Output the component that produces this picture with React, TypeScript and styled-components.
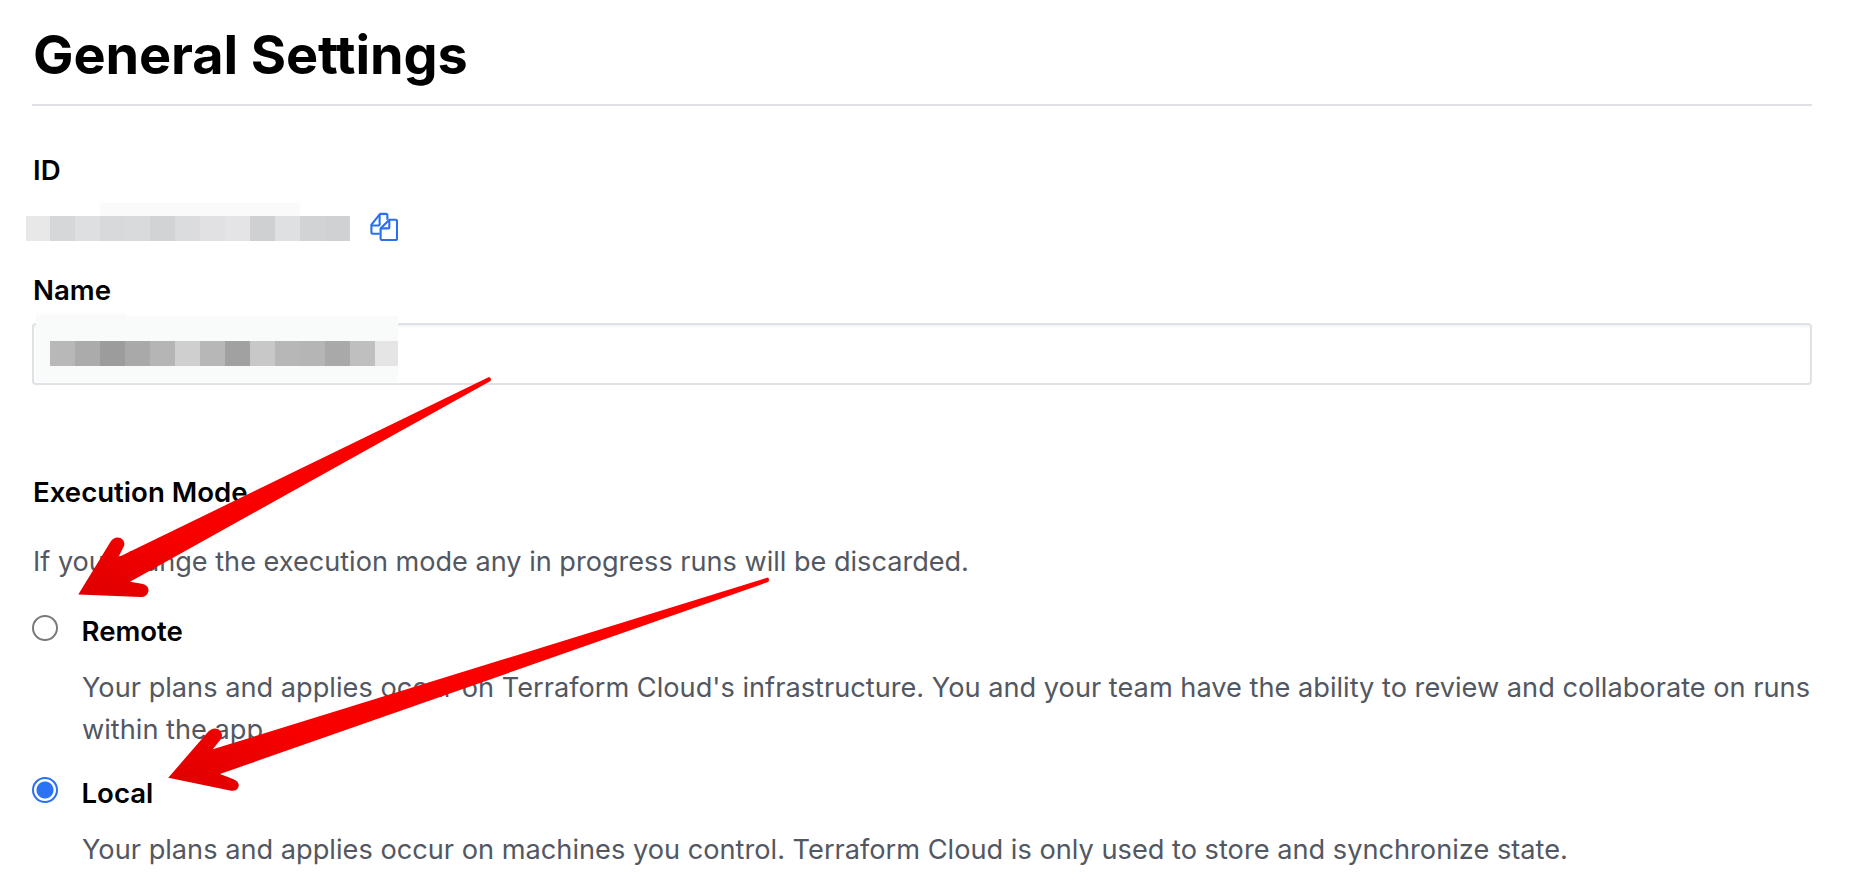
import React from 'react'
import styled, { createGlobalStyle } from 'styled-components'

const GlobalStyle = createGlobalStyle`
  html, body {
    margin: 0;
    padding: 0;
    background: #fff;
    overflow: hidden;
  }
  body {
    font-family: Inter, "Liberation Sans", sans-serif;
  }
`

const Page = styled.div`
  position: relative;
  width: 1854px;
  height: 892px;
  overflow: hidden;
  box-sizing: border-box;
  padding: 0 42px 0 32px;
`

const Title = styled.h1`
  margin: 0;
  padding: 21px 0 0 1px;
  height: 106px;
  box-sizing: border-box;
  border-bottom: 2px solid #dfe1e5;
  font-size: 54px;
  line-height: 68px;
  font-weight: 700;
  letter-spacing: -0.1px;
  color: #000;
`

const Label = styled.div<{ $top: number }>`
  margin-top: ${({ $top }) => $top}px;
  padding-left: 1px;
  font-size: 27.6px;
  line-height: 32px;
  font-weight: 600;
  color: #000;
`

const IdRow = styled.div`
  display: flex;
  align-items: center;
  gap: 19px;
  margin: 17px 0 0 -6px;
  height: 38px;
`

const Pixels = styled.div`
  position: relative;
  display: flex;
  align-self: flex-end;
`

const Cell = styled.span<{ $color: string; $wide?: number }>`
  display: block;
  width: ${({ $wide }) => $wide ?? 25}px;
  height: 25px;
  background: ${({ $color }) => $color};
`

const FaintRow = styled.span`
  position: absolute;
  left: 74px;
  top: -13px;
  width: 200px;
  height: 13px;
  background: #fafafa;
`

const CopyIcon = styled.svg`
  width: 29px;
  height: 29px;
  color: #2b6ff0;
  margin-top: 8px;
`

const Input = styled.div`
  position: relative;
  height: 62px;
  margin-top: 17px;
  box-sizing: border-box;
  border: 2px solid #dfe2e6;
  border-radius: 4px;
  box-shadow: inset 0 2px 2px #f3f4f6;
`

const InputPatch = styled.div`
  position: absolute;
  left: 2px;
  top: -9px;
  width: 362px;
  height: 66px;
  box-sizing: border-box;
  padding: 25px 0 0 14px;
  display: flex;
  background: #f9fafa;
`

const PatchEdge = styled.span`
  position: absolute;
  left: 0;
  top: -3px;
  width: 90px;
  height: 3px;
  background: #fbfbfb;
`

const Hint = styled.p`
  margin: 33px 0 0;
  padding-left: 1px;
  font-size: 27.1px;
  line-height: 42px;
  font-weight: 400;
  color: #525761;
`

const RadioRow = styled.div<{ $top: number }>`
  display: flex;
  align-items: center;
  gap: 23.5px;
  height: 34px;
  margin-top: ${({ $top }) => $top}px;
`

const Radio = styled.span<{ $checked?: boolean }>`
  position: relative;
  top: -3px;
  width: 26px;
  height: 26px;
  box-sizing: border-box;
  border-radius: 50%;
  border: 2px solid ${({ $checked }) => ($checked ? '#2b6ff0' : '#7a7a7a')};
  background: ${({ $checked }) => ($checked ? 'radial-gradient(circle, #2b72f5 0 8px, #fff 9px)' : '#fff')};
`

const OptionName = styled.span`
  font-size: 27.6px;
  line-height: 34px;
  font-weight: 600;
  color: #000;
`

const OptionText = styled.p`
  margin: 19px 0 0 50px;
  font-size: 27.2px;
  line-height: 42px;
  font-weight: 400;
  color: #525761;
`

const ArrowLayer = styled.svg`
  position: absolute;
  left: 0;
  top: 0;
  width: 1854px;
  height: 892px;
  pointer-events: none;
`

const idCells = ['#e8e8e9', '#d6d7d9', '#dedfe0', '#d8d9db', '#d9dadc', '#d2d3d5', '#dbdcde', '#e1e1e3', '#e4e4e6', '#cfd0d2', '#dfe0e2', '#d2d3d5', '#d0d1d3']
const nameCells = ['#b8b8b8', '#ababab', '#9c9c9c', '#a9a9a9', '#b5b5b5', '#cfcfcf', '#b7b7b7', '#a1a1a1', '#c8c8c8', '#b7b7b7', '#b5b5b5', '#a9a9a9', '#bfbfbf']

const App = () => {
  return (
    <Page>
      <GlobalStyle />
      <Title>General Settings</Title>

      <Label $top={48}>ID</Label>
      <IdRow>
        <Pixels>
          <FaintRow />
          {idCells.map((color, i) => (
            <Cell key={i} $color={color} $wide={i === 0 ? 24 : 25} />
          ))}
        </Pixels>
        <CopyIcon viewBox="0 0 30 30" fill="none" stroke="currentColor" strokeWidth="2.2" strokeLinejoin="round">
          <path d="M11 22.5H4a1.5 1.5 0 0 1-1.5-1.5V13L11.5 2H17.5a1.5 1.5 0 0 1 1.5 1.5V8" />
          <path d="M2.5 14H10a1 1 0 0 0 1-1V2" />
          <path d="M12 17L21 8H27.5a1.5 1.5 0 0 1 1.5 1.5V27.5a1.5 1.5 0 0 1-1.5 1.5H13.5a1.5 1.5 0 0 1-1.5-1.5z" />
          <path d="M12 17H20a1 1 0 0 0 1-1V8" />
        </CopyIcon>
      </IdRow>

      <Label $top={33}>Name</Label>
      <Input>
        <InputPatch>
          <PatchEdge />
          {nameCells.map((color, i) => (
            <Cell key={i} $color={color} />
          ))}
          <Cell $color="#e5e5e5" $wide={23} />
        </InputPatch>
      </Input>

      <Label $top={91}>Execution Mode</Label>
      <Hint>If you change the execution mode any in progress runs will be discarded.</Hint>

      <RadioRow $top={31}>
        <Radio />
        <OptionName>Remote</OptionName>
      </RadioRow>
      <OptionText>
        Your plans and applies occur on Terraform Cloud's infrastructure. You and your team have the ability to review and collaborate on runs within the app
      </OptionText>

      <RadioRow $top={25}>
        <Radio $checked />
        <OptionName>Local</OptionName>
      </RadioRow>
      <OptionText>
        Your plans and applies occur on machines you control. Terraform Cloud is only used to store and synchronize state.
      </OptionText>

      <ArrowLayer viewBox="0 0 1854 892">
        <defs>
          <linearGradient id="redFade" x1="1" y1="0" x2="0" y2="1">
            <stop offset="0" stopColor="#ff0000" />
            <stop offset="0.75" stopColor="#f80000" />
            <stop offset="1" stopColor="#dd0000" />
          </linearGradient>
        </defs>
        <path
          fill="url(#redFade)"
          d="M489 377 Q492 378 490.5 381 L130 581.7 L143 584 Q149 586 148.5 591 Q147 597 141 597 L78.3 594.5 L111 541 Q115 536 120.5 538 Q125.5 541 124 546 L118.3 557.3 Z"
        />
        <path
          fill="url(#redFade)"
          d="M768 577.5 Q770 579.5 768 582 L220 774 L233 779 Q240 782 238.5 787 Q236 792 230 790.5 L168.3 777.7 L207 733 Q212 727 218 729 Q224 733 221 739 L212.7 749.3 Z"
        />
      </ArrowLayer>
    </Page>
  )
}

export default App
